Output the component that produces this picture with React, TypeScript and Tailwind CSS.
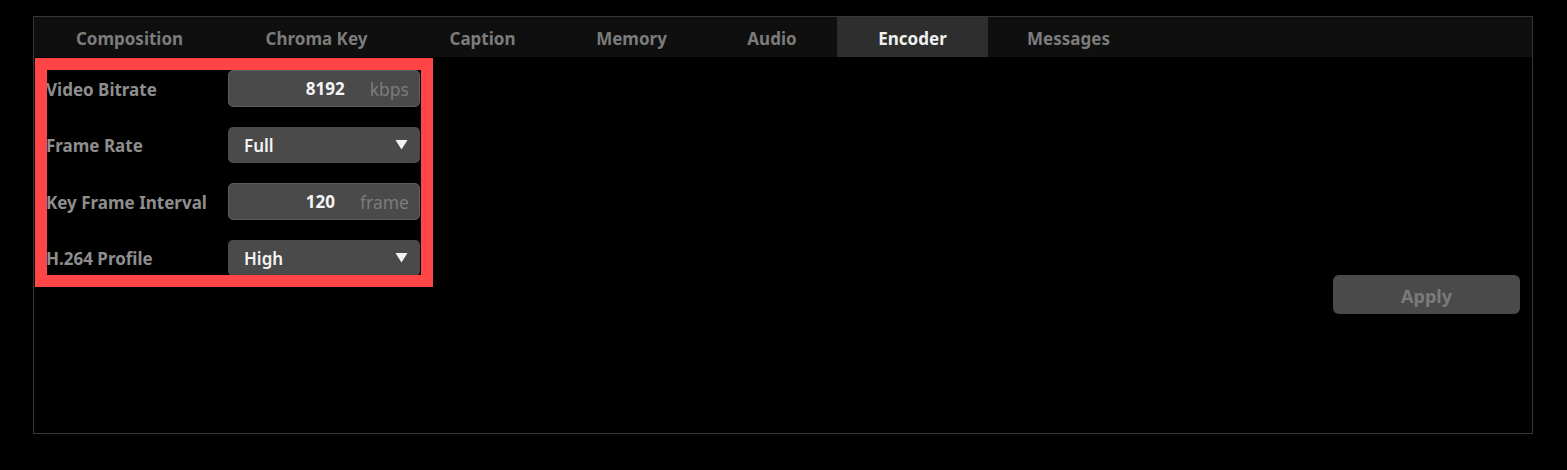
import React from 'react'

const tabs = [
  { name: "Composition", w: "w-[189px]" },
  { name: "Chroma Key", w: "w-[185px]" },
  { name: "Caption", w: "w-[147px]" },
  { name: "Memory", w: "w-[151px]" },
  { name: "Audio", w: "w-[130px]" },
  { name: "Encoder", w: "w-[151px]", active: true },
  { name: "Messages", w: "w-[161px]" },
]

const Caret = () => (
  <svg width="13" height="11" viewBox="0 0 13 11" className="block">
    <path d="M0.5 1 L12.5 1 L6.5 10.5 Z" fill="#f2f2f2" />
  </svg>
)

const NumberField = ({ value, unit }: { value: string; unit: string }) => (
  <div className="w-[192px] h-[37px] rounded-[5px] bg-[#4a4a4a] border border-[#5e5e5e] flex items-center justify-end gap-[25px] pr-[10px] pt-[1px]">
    <span className="text-[17px] font-bold text-[#f4f4f4]">{value}</span>
    <span className="text-[17.5px] text-[#7c7c7c]">{unit}</span>
  </div>
)

const Dropdown = ({ value }: { value: string }) => (
  <div className="w-[192px] h-[36px] rounded-[5px] bg-[#4a4a4a] flex items-center justify-between pl-[16px] pr-[12px]">
    <span className="text-[17px] font-semibold text-[#f4f4f4] pt-[1px]">{value}</span>
    <Caret />
  </div>
)

const rows = [
  { label: "Video Bitrate", field: <NumberField value="8192" unit="kbps" /> },
  { label: "Frame Rate", field: <Dropdown value="Full" /> },
  { label: "Key Frame Interval", field: <NumberField value="120" unit="frame" /> },
  { label: "H.264 Profile", field: <Dropdown value="High" /> },
]

const App = () => {
  return (
    <div
      className="w-[1567px] h-[470px] bg-black pt-[16px] pl-[33px] overflow-hidden"
      style={{ fontFamily: '"Noto Sans", "Open Sans", sans-serif' }}>
      <div className="relative w-[1500px] h-[418px] border border-[#363636] flex flex-col">
        <nav className="flex h-[40px] bg-[#0f0f0f] pl-[1px]">
          {tabs.map((tab) => (
            <div
              key={tab.name}
              className={`${tab.w} h-full flex items-center justify-center pt-[3px] text-[17px] font-bold ${tab.active ? "bg-[#2e2e2e] text-[#f0f0f0]" : "text-[#7c7c7c]"}`}>
              {tab.name}
            </div>
          ))}
        </nav>
        <div className="flex-1 flex justify-between">
          <div className="pt-[13px] pl-[12px] flex flex-col gap-[20px]">
            {rows.map((row) => (
              <div key={row.label} className="flex items-center h-[36.5px]">
                <span className="w-[182px] text-[17px] font-bold text-[#8e8e8e] pt-[2px]">{row.label}</span>
                {row.field}
              </div>
            ))}
          </div>
          <div className="pt-[218px] pr-[12px]">
            <button className="w-[187px] h-[39px] rounded-[6px] bg-[#4a4a4a] pt-[3px] text-[18px] font-bold text-[#7a7a7a]">
              Apply
            </button>
          </div>
        </div>
        {/* highlight annotation */}
        <div className="absolute left-[1px] top-[41px] w-[398px] h-[229px] border-[12px] border-[#ff4545] pointer-events-none" />
      </div>
    </div>
  )
}

export default App
